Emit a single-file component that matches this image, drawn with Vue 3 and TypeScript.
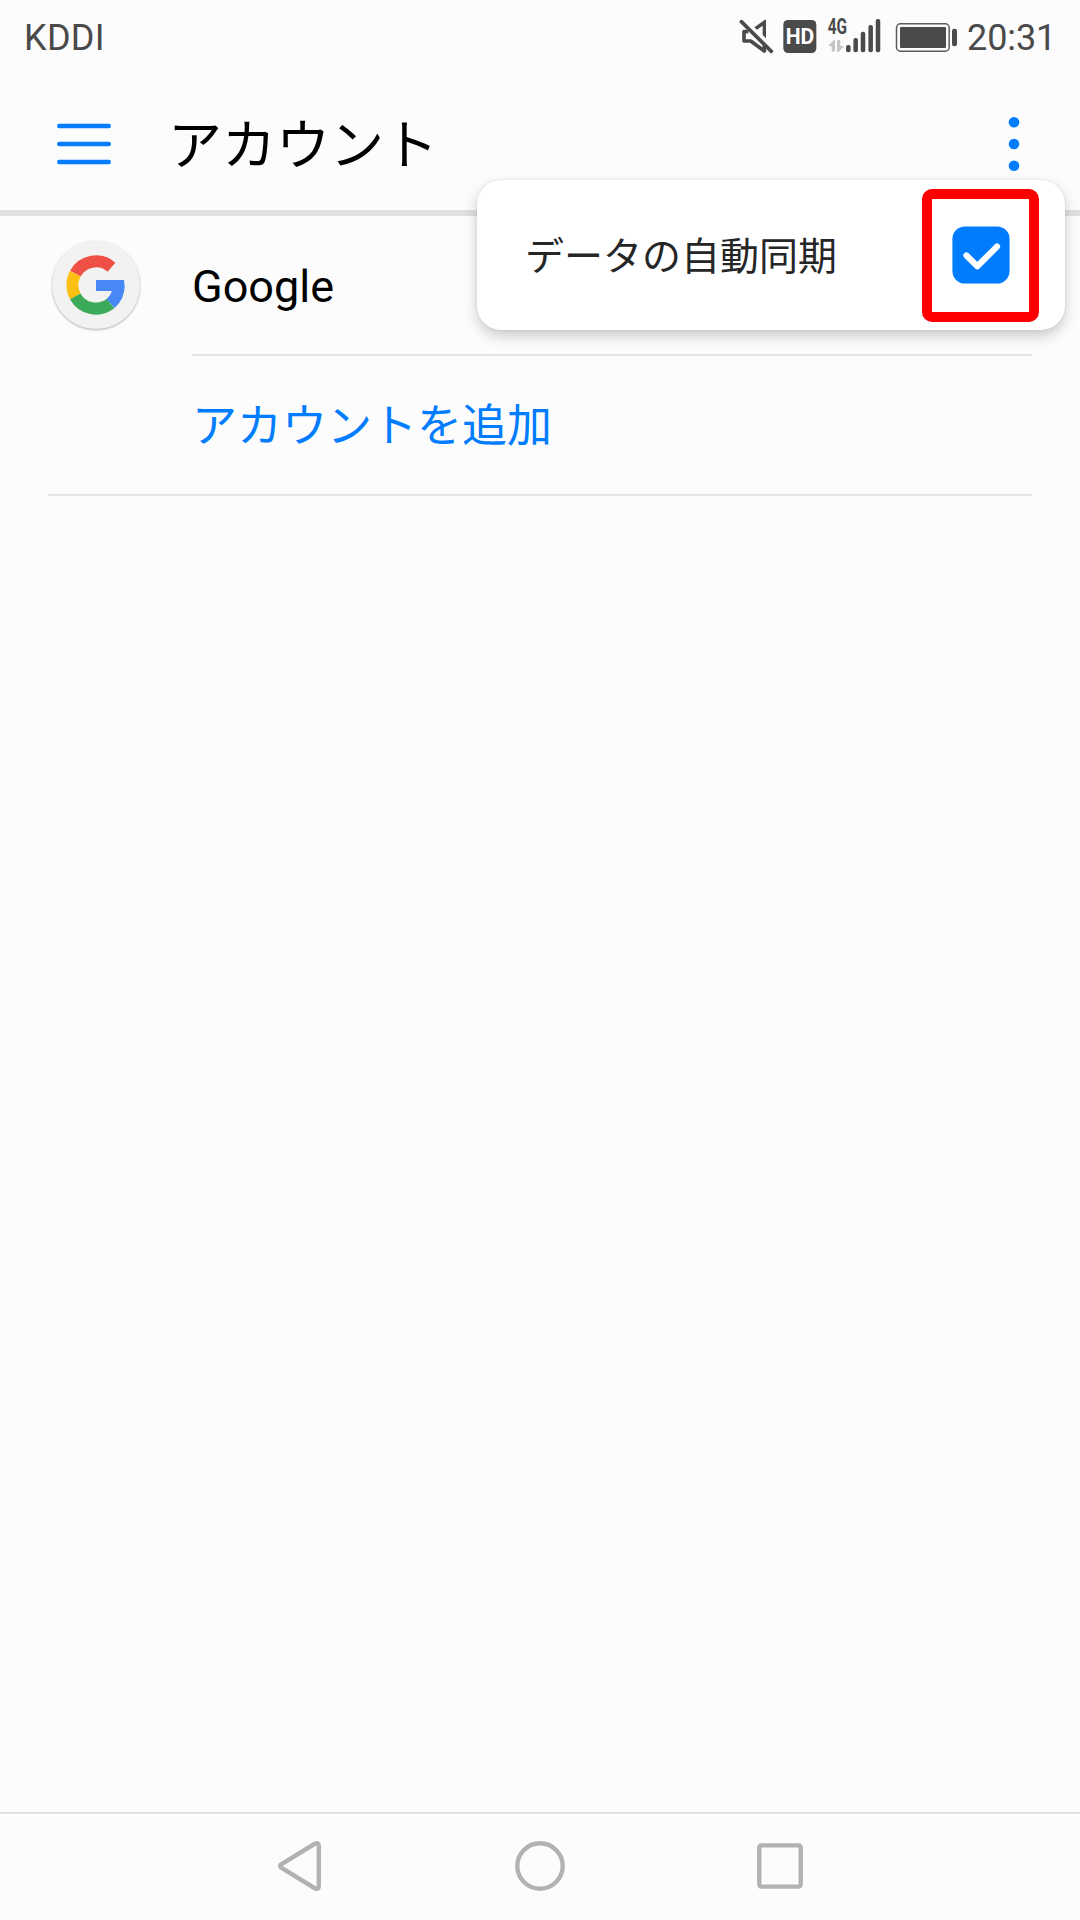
<script setup lang="ts">
const signalBars: { x: number; top: number }[] = [
  { x: 384, top: 135 },
  { x: 406, top: 114 },
  { x: 428, top: 95 },
  { x: 451, top: 75 },
  { x: 473, top: 57 },
]
const menuDots: number[] = [5.3, 27, 48.7]
const syncLabel: string = 'データの自動同期'
</script>

<template>
  <div class="screen">
    <header class="status">
      <span class="carrier">KDDI</span>
      <svg class="status-icons" width="230" height="60" viewBox="50 0 690 180">
        <g fill="none" stroke="#4a4a4a" stroke-width="11" stroke-linejoin="round">
          <path d="M63 65L153 154" stroke-linecap="round" />
          <path d="M84 95H71V123H91L132 153V134" />
        </g>
        <path fill="#4a4a4a" d="M102 82L134 59Q137 58 137 62V115L127 105V77L110 89Z" />
        <rect x="189" y="60" width="99" height="99" rx="14" fill="#4a4a4a" />
        <text x="196" y="133" class="hd" textLength="86" lengthAdjust="spacingAndGlyphs">HD</text>
        <text x="322" y="102" class="net" textLength="58" lengthAdjust="spacingAndGlyphs">4G</text>
        <path fill="#c4c4c4" d="M323 138L340 121Q344 118 344 123V151Q344 156 339 156Q334 156 334 151V138ZM372 138L355 155Q350 158 350 153V124Q350 119 355 119Q360 119 360 124V138Z" />
        <rect v-for="bar in signalBars" :key="bar.x" :x="bar.x - 6.8" :y="bar.top" width="13.6" :height="157 - bar.top" rx="6" fill="#4a4a4a" />
        <rect x="528.5" y="71.5" width="158" height="82" rx="12" fill="none" stroke="#5c5c5c" stroke-width="4.5" />
        <rect x="539" y="81" width="138" height="63" rx="3" fill="#4a4a4a" />
        <rect x="695" y="86" width="15" height="53" rx="7" fill="#4a4a4a" />
      </svg>
      <span class="clock">20:31</span>
    </header>

    <div class="titlebar">
      <svg class="hamburger" width="54" height="42" viewBox="0 0 54 42">
        <path d="M2.3 3H51.7M2.3 21H51.7M2.3 39H51.7" stroke="#007dff" stroke-width="4.5" stroke-linecap="round" />
      </svg>
      <h1>アカウント</h1>
      <svg class="more" width="12" height="54" viewBox="0 0 12 54">
        <circle v-for="cy in menuDots" :key="cy" cx="6" :cy="cy" r="5.3" fill="#007dff" />
      </svg>
    </div>

    <main>
      <div class="row account">
        <svg class="logo" width="96" height="96" viewBox="-48 -48 96 96">
          <circle class="disc" r="44" fill="#f2f2f2" />
          <g fill="none" stroke-width="12">
            <path d="M-20.7 -11.3A23.6 23.6 0 0 1 15.5 -17.8" stroke="#ee5045" />
            <path d="M-20.7 11.3A23.6 23.6 0 0 1 -20.7 -11.3" stroke="#fcc013" />
            <path d="M14.6 18.5A23.6 23.6 0 0 1 -20.7 11.3" stroke="#3cab59" />
            <path d="M22.6 0A23.6 23.6 0 0 1 14.6 18.5" stroke="#4788f4" />
          </g>
          <path fill="#4788f4" d="M0 -5H28Q28.8 0 28 6H0Z" />
        </svg>
        <span class="name">Google</span>
      </div>
      <div class="row add">アカウントを追加</div>
    </main>

    <nav>
      <svg width="1080" height="106" viewBox="0 1814 1080 106" fill="none" stroke="#b2b2b2" stroke-width="4.4" stroke-linejoin="round">
        <path d="M281.2 1864.3L315.2 1843.5Q318.8 1842.2 318.8 1846V1886Q318.8 1889.8 315.2 1888.5L281.2 1867.7Q279.2 1866 281.2 1864.3Z" />
        <circle cx="540" cy="1866" r="22.7" />
        <rect x="759.3" y="1845.4" width="41.4" height="41.2" rx="2" />
      </svg>
    </nav>

    <div class="popup">
      <span class="label">{{ syncLabel }}</span>
      <div class="highlight">
        <svg width="58" height="58" viewBox="0 0 58 58">
          <rect x=".4" y=".4" width="57.2" height="57.2" rx="12.5" fill="#007dff" />
          <path d="M14.5 29.5L25.3 40.3L45 20.6" fill="none" stroke="#fff" stroke-width="6.2" stroke-linecap="round" stroke-linejoin="round" />
        </svg>
      </div>
    </div>
  </div>
</template>

<style>
body {
  margin: 0;
  background: #fcfcfc;
}
</style>

<style scoped>
.screen {
  position: relative;
  display: flex;
  flex-direction: column;
  width: 1080px;
  height: 1920px;
  overflow: hidden;
  background: #fcfcfc;
  color: #000;
  font-family: Roboto, "Noto Sans CJK JP", sans-serif;
}
svg {
  display: block;
  flex: none;
}
.status {
  display: flex;
  flex: none;
  height: 72px;
  color: #4a4a4a;
  font-size: 36px;
  line-height: 77px;
}
.carrier {
  width: 737px;
  padding-left: 24px;
  box-sizing: border-box;
  flex: none;
  letter-spacing: 0.3px;
}
.hd,
.net {
  font-weight: 700;
  font-size: 65px;
  fill: #fff;
}
.net {
  fill: #4a4a4a;
}
.clock {
  white-space: nowrap;
  letter-spacing: -0.1px;
}
.titlebar {
  display: flex;
  align-items: center;
  flex: none;
  height: 132px;
  padding: 6px 60px 0 57px;
  border-bottom: 6px solid #e0e0e0;
}
.titlebar h1 {
  flex: 1;
  margin: 0 0 0 57px;
  padding-top: 5px;
  font-size: 54px;
  font-weight: 400;
  line-height: 80px;
}
.row {
  display: flex;
  align-items: center;
  box-sizing: border-box;
  height: 140px;
  border-bottom: 2px solid #e5e5e5;
}
.account {
  margin: 0 48px 0 192px;
  font-size: 45px;
}
.name {
  padding-top: 3px;
}
.logo {
  margin-left: -144px;
  margin-right: 48px;
}
.disc {
  filter: drop-shadow(0 1.5px 1px rgba(0, 0, 0, 0.3));
}
.add {
  margin: 0 48px;
  padding: 0 0 5px 144px;
  color: #007dff;
  font-size: 45px;
}
nav {
  margin-top: auto;
  border-top: 2px solid #e0e0e0;
}
.popup {
  position: absolute;
  left: 477px;
  top: 180px;
  display: flex;
  align-items: center;
  justify-content: space-between;
  width: 588px;
  height: 150px;
  padding: 0 26px 0 48px;
  box-sizing: border-box;
  border-radius: 24px;
  background: #fff;
  box-shadow: 0 6px 14px rgba(0, 0, 0, 0.2), 0 0 2px rgba(0, 0, 0, 0.12);
  color: #262626;
  font-size: 39px;
}
.label {
  padding-bottom: 4px;
}
.highlight {
  display: flex;
  align-items: center;
  justify-content: center;
  width: 117px;
  height: 133px;
  box-sizing: border-box;
  border: 10px solid #f00;
  border-radius: 10px;
}
</style>
